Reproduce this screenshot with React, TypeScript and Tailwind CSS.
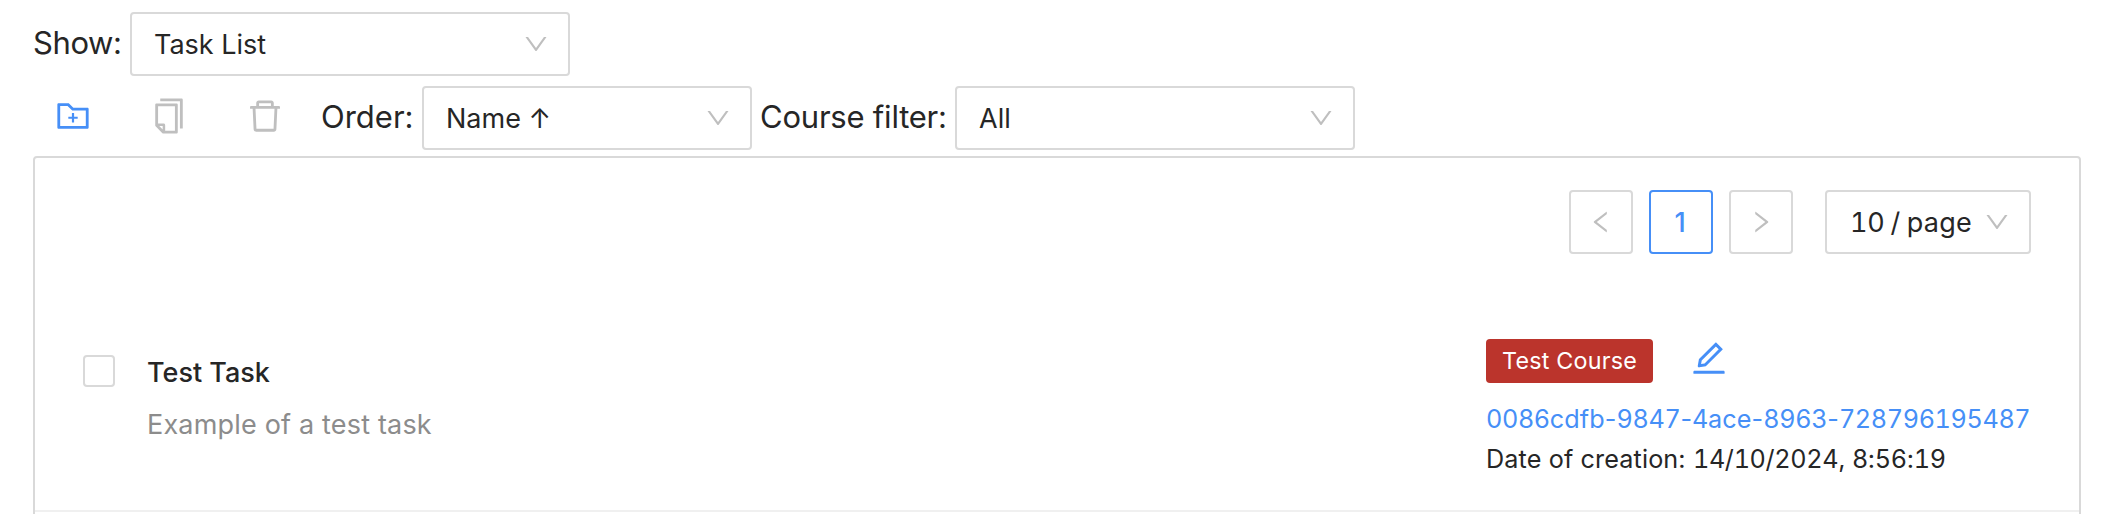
import type { ReactNode } from 'react';
import {
  AiOutlineCopy,
  AiOutlineDelete,
  AiOutlineDown,
  AiOutlineEdit,
  AiOutlineFolderAdd,
  AiOutlineLeft,
  AiOutlineRight,
} from 'react-icons/ai';

/* Sets runs of digits in tabular figures and leaves the punctuation proportional. */
function Figures({ text }: { text: string }) {
  return (
    <span className="whitespace-pre">
      {text.split(/(\d+)/).map((part, i) =>
        i % 2 ? (
          <span key={i} className="tracking-[-0.38px] tabular-nums">
            {part}
          </span>
        ) : (
          part
        ),
      )}
    </span>
  );
}

function Select({ width, children }: { width: string; children: ReactNode }) {
  return (
    <button
      className={`flex h-16 shrink-0 items-center justify-between rounded-[4px] border-2 border-[#d9d9d9] bg-white pr-[18px] pl-[22px] text-[27px] whitespace-nowrap ${width}`}
    >
      <span className="pt-[2px]">{children}</span>
      <AiOutlineDown className="size-7 text-[#bfbfbf]" />
    </button>
  );
}

function PageButton({ className, children }: { className: string; children: ReactNode }) {
  return (
    <button
      className={`flex size-16 items-center justify-center rounded-[4px] border-2 text-[27px] font-medium ${className}`}
    >
      {children}
    </button>
  );
}

function Toolbar() {
  return (
    <div className="flex h-16 items-center">
      <div className="flex items-center gap-14 pb-1 pl-5">
        <AiOutlineFolderAdd className="size-10 text-[#468ff7]" />
        <AiOutlineCopy className="size-10 text-[#bfbfbf]" />
        <AiOutlineDelete className="size-10 text-[#bfbfbf]" />
      </div>
      <span className="ml-9 w-[101px] pb-[2px] text-[31px]">Order:</span>
      <Select width="w-[330px]">Name ↑</Select>
      <span className="ml-2 w-[195px] pb-[2px] text-[31px] tracking-[-0.22px] whitespace-nowrap">
        Course filter:
      </span>
      <Select width="w-[400px]">All</Select>
    </div>
  );
}

function Pagination() {
  return (
    <nav className="flex justify-end gap-4">
      <PageButton className="border-[#d9d9d9] text-[#bfbfbf]">
        <AiOutlineLeft className="size-7" />
      </PageButton>
      <PageButton className="border-[#468ff7] text-[#468ff7]">
        <span className="pt-[2px] pr-[2px]">1</span>
      </PageButton>
      <PageButton className="border-[#d9d9d9] text-[#bfbfbf]">
        <AiOutlineRight className="size-7" />
      </PageButton>
      <div className="ml-4">
        <Select width="w-[206px]">
          <span className="pl-px tracking-[0.2px] [word-spacing:-1.5px]">
            <Figures text="10 / page" />
          </span>
        </Select>
      </div>
    </nav>
  );
}

function TaskRow() {
  return (
    <div className="flex h-[173px] border-b-2 border-[#f0f0f0] px-12">
      <div className="mt-4 size-8 rounded-[4px] border-2 border-[#d9d9d9]" />
      <div className="ml-8 flex-1 pt-[9px]">
        <h3 className="text-[27px] leading-[50px] font-medium">Test Task</h3>
        <p className="mt-[2px] text-[27px] leading-[50px] tracking-[0.18px] text-[#8c8c8c]">
          Example of a test task
        </p>
      </div>
      <div className="w-[545px] whitespace-nowrap">
        <div className="flex">
          <span className="flex h-11 w-[167px] items-center justify-center rounded-[4px] bg-[#bb342c] pt-px text-[23.3px] tracking-[0.2px] text-white">
            Test Course
          </span>
          <AiOutlineEdit className="-mt-px ml-9 size-10 text-[#468ff7]" />
        </div>
        <div className="mt-4 text-[25.2px] leading-10 tracking-[0.12px] text-[#468ff7]">
          <Figures text="0086cdfb-9847-4ace-8963-728796195487" />
        </div>
        <div className="text-[25.2px] leading-10 tracking-[0.12px]">
          <Figures text="Date of creation: " />
          <span className="tracking-[-0.3px]">
            <Figures text="14/10/2024, 8:56:19" />
          </span>
        </div>
      </div>
    </div>
  );
}

export default function App() {
  return (
    <main className="h-[514px] w-[2112px] overflow-hidden bg-white pt-3 pr-[31px] pl-[33px] font-['Inter',sans-serif] text-[#262626]">
      <div className="flex h-16 items-center">
        <span className="w-[97px] pb-[2px] text-[31px] tracking-[-0.4px]">Show:</span>
        <Select width="w-[440px]">Task List</Select>
      </div>
      <div className="mt-[10px]">
        <Toolbar />
      </div>
      <section className="mt-[6px] h-[400px] rounded-[4px] border-2 border-[#d9d9d9] pt-8">
        <div className="pr-12">
          <Pagination />
        </div>
        <div className="pt-[85px]">
          <TaskRow />
        </div>
      </section>
    </main>
  );
}
